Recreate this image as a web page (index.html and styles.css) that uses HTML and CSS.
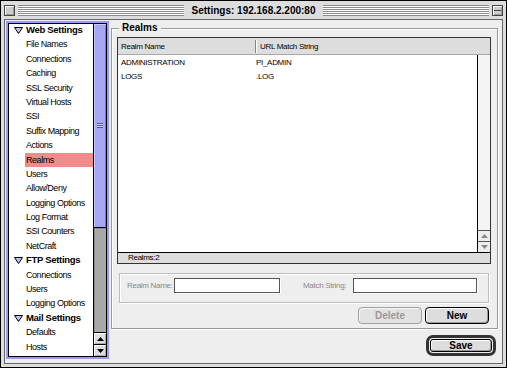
FILE: index.html
```html
<!DOCTYPE html>
<html lang="en">
<head>
    <meta charset="UTF-8">
    <meta name="viewport" content="width=device-width, initial-scale=1.0">
    <title>Settings: 192.168.2.200:80</title>
    <link rel="stylesheet" href="styles.css">
</head>
<body>
    <div class="window">
        <!-- Title bar -->
        <div class="titlebar">
            <span class="close-box"></span>
            <span class="stripes"></span>
            <span class="title">Settings: 192.168.2.200:80</span>
            <span class="stripes"></span>
            <span class="collapse-box"><span class="collapse-line"></span></span>
        </div>

        <div class="frame">
            <div class="content">
                <!-- Settings tree -->
                <div class="sidebar">
                    <div class="sidebar-inner">
                        <ul class="tree">
                            <li class="head"><svg class="disclosure" width="9" height="7" viewBox="0 0 9 7"><polygon points="0.5,0.5 8.5,0.5 4.5,6.5" fill="#c4c4f4" stroke="#000" stroke-width="1"/></svg>Web Settings</li>
                            <li>File Names</li>
                            <li>Connections</li>
                            <li>Caching</li>
                            <li>SSL Security</li>
                            <li>Virtual Hosts</li>
                            <li>SSI</li>
                            <li>Suffix Mapping</li>
                            <li>Actions</li>
                            <li class="selected">Realms</li>
                            <li>Users</li>
                            <li>Allow/Deny</li>
                            <li>Logging Options</li>
                            <li>Log Format</li>
                            <li>SSI Counters</li>
                            <li>NetCraft</li>
                            <li class="head"><svg class="disclosure" width="9" height="7" viewBox="0 0 9 7"><polygon points="0.5,0.5 8.5,0.5 4.5,6.5" fill="#c4c4f4" stroke="#000" stroke-width="1"/></svg>FTP Settings</li>
                            <li>Connections</li>
                            <li>Users</li>
                            <li>Logging Options</li>
                            <li class="head"><svg class="disclosure" width="9" height="7" viewBox="0 0 9 7"><polygon points="0.5,0.5 8.5,0.5 4.5,6.5" fill="#c4c4f4" stroke="#000" stroke-width="1"/></svg>Mail Settings</li>
                            <li>Defaults</li>
                            <li>Hosts</li>
                        </ul>
                        <div class="vscroll">
                            <div class="thumb"><span class="grip"></span></div>
                            <div class="track"></div>
                            <div class="arrow"><svg width="7" height="4" viewBox="0 0 7 4"><polygon points="3.5,0 7,4 0,4" fill="#000"/></svg></div>
                            <div class="arrow"><svg width="7" height="4" viewBox="0 0 7 4"><polygon points="0,0 7,0 3.5,4" fill="#000"/></svg></div>
                        </div>
                    </div>
                </div>

                <!-- Realms panel -->
                <div class="main">
                    <fieldset class="group">
                        <legend>Realms</legend>

                        <div class="table">
                            <div class="thead">
                                <div class="col1">Realm Name</div>
                                <div class="sep"></div>
                                <div class="col2">URL Match String</div>
                            </div>
                            <div class="tbody">
                                <div class="rows">
                                    <div class="row"><span class="cell1">ADMINISTRATION</span><span class="cell2">PI_ADMIN</span></div>
                                    <div class="row"><span class="cell1">LOGS</span><span class="cell2">.LOG</span></div>
                                </div>
                                <div class="tscroll">
                                    <div class="ttrack"></div>
                                    <div class="tarrow"><svg width="7" height="4" viewBox="0 0 7 4"><polygon points="3.5,0 7,4 0,4" fill="#888"/></svg></div>
                                    <div class="tarrow"><svg width="7" height="4" viewBox="0 0 7 4"><polygon points="0,0 7,0 3.5,4" fill="#888"/></svg></div>
                                </div>
                            </div>
                            <div class="tfoot">Realms:2</div>
                        </div>

                        <div class="edit-box">
                            <label class="lbl lbl-name">Realm Name:</label>
                            <input class="field field-name" type="text" disabled>
                            <label class="lbl lbl-match">Match String:</label>
                            <input class="field field-match" type="text" disabled>
                        </div>

                        <div class="actions">
                            <button class="btn" disabled>Delete</button>
                            <button class="btn">New</button>
                        </div>
                    </fieldset>

                    <div class="save-row">
                        <span class="default-ring"><button class="btn btn-save">Save</button></span>
                    </div>
                </div>
            </div>
        </div>
    </div>
</body>
</html>
```

FILE: styles.css
```css
* {
    margin: 0;
    padding: 0;
    box-sizing: border-box;
}

body {
    width: 507px;
    height: 368px;
    overflow: hidden;
    background: #dddddd;
    color: #000;
    font-family: "Liberation Sans", Arial, sans-serif;
}

/* Window chrome */
.window {
    width: 507px;
    height: 368px;
    border: 1px solid #000;
    background: #dddddd;
    display: flex;
    flex-direction: column;
}

.titlebar {
    height: 18px;
    display: flex;
    align-items: center;
    gap: 3px;
    padding: 0 3px;
}

.close-box,
.collapse-box {
    width: 11px;
    height: 11px;
    flex: none;
    border: 1px solid #444;
    background: #cccccc;
    box-shadow: inset 1px 1px 0 #fff, inset -1px -1px 0 #999;
}

.collapse-box {
    display: flex;
    align-items: center;
    padding: 0 1px;
}

.collapse-line {
    flex: 1;
    height: 1px;
    background: #444;
}

.stripes {
    flex: 1;
    height: 11px;
    background: repeating-linear-gradient(to bottom, #8a8a8a 0, #8a8a8a 1px, #fff 1px, #fff 2px);
}

.title {
    padding: 0 5px;
    font-size: 10px;
    font-weight: bold;
    white-space: nowrap;
}

.frame {
    flex: 1;
    padding: 0 3px 3px;
}

.content {
    height: 100%;
    border: 1px solid #666;
    background: #eeeeee;
    display: flex;
    padding: 1px 0 0 1px;
}

/* Sidebar tree */
.sidebar {
    width: 103px;
    height: 338px;
    flex: none;
    border: 2px solid #9a9af2;
}

.sidebar-inner {
    height: 100%;
    border: 1px solid #000;
    background: #fff;
    display: flex;
}

.tree {
    width: 84px;
    list-style: none;
    overflow: hidden;
    margin-top: -1px;
    font-size: 9px;
    letter-spacing: -0.45px;
}

.tree li {
    height: 14.4px;
    line-height: 14.4px;
    padding-left: 17px;
    white-space: nowrap;
}

.tree li.selected {
    margin-left: 16px;
    padding-left: 1px;
    background: #f28b8b;
}

.tree li.head {
    display: flex;
    align-items: center;
    gap: 3px;
    padding-left: 5px;
    font-size: 9.5px;
    font-weight: bold;
    letter-spacing: -0.3px;
}

.disclosure {
    flex: none;
}

.vscroll {
    width: 13px;
    flex: none;
    border-left: 1px solid #000;
    display: flex;
    flex-direction: column;
}

.thumb {
    height: 204px;
    flex: none;
    background: #a6a6f6;
    border-bottom: 1px solid #000;
    box-shadow: inset 1px 1px 0 #c8c8ff, inset -1px 0 0 #7a7ad0;
    display: flex;
    align-items: center;
    justify-content: center;
}

.grip {
    width: 6px;
    height: 5px;
    background: repeating-linear-gradient(to bottom, #5050b0 0, #5050b0 1px, #d4d4ff 1px, #d4d4ff 2px);
}

.track {
    flex: 1;
    background: #a8a8a8;
    box-shadow: inset 1px 1px 0 #8c8c8c;
}

.arrow {
    height: 12px;
    flex: none;
    border-top: 1px solid #000;
    background: #dddddd;
    box-shadow: inset 1px 1px 0 #fff, inset -1px -1px 0 #aaa;
    display: flex;
    align-items: center;
    justify-content: center;
}

/* Main panel */
.main {
    flex: 1;
    display: flex;
    flex-direction: column;
    padding: 0 4px 0 2px;
}

.group {
    margin-top: 1px;
    min-width: 0;
    border: 1px solid #9a9a9a;
    box-shadow: inset 1px 1px 0 #fff, 1px 1px 0 #fff;
    padding: 3px 6px 4px 5px;
}

.group legend {
    margin-left: 2px;
    padding: 0 3px;
    font-size: 10px;
    line-height: 12px;
    font-weight: bold;
}

.table {
    height: 227px;
    border: 1px solid #333;
    display: flex;
    flex-direction: column;
    font-size: 8px;
    letter-spacing: -0.3px;
}

.thead {
    height: 17px;
    flex: none;
    display: flex;
    align-items: center;
    background: #dddddd;
    border-bottom: 1px solid #aaa;
}

.thead .col1 {
    width: 137px;
    padding-left: 3px;
}

.thead .sep {
    width: 2px;
    height: 13px;
    border-left: 1px solid #888;
    border-right: 1px solid #fff;
}

.thead .col2 {
    padding-left: 3px;
}

.tbody {
    flex: 1;
    display: flex;
}

.rows {
    flex: 1;
    background: #fff;
}

.row {
    height: 14.5px;
    display: flex;
    align-items: center;
}

.cell1 {
    width: 138px;
    padding-left: 3px;
}

.tscroll {
    width: 13px;
    flex: none;
    border-left: 1px solid #000;
    display: flex;
    flex-direction: column;
    background: #f4f4f4;
}

.ttrack {
    flex: 1;
}

.tarrow {
    height: 11px;
    flex: none;
    border-top: 1px solid #555;
    background: #eeeeee;
    display: flex;
    align-items: center;
    justify-content: center;
}

.tfoot {
    height: 11px;
    flex: none;
    border-top: 1px solid #000;
    background: #dddddd;
    padding-left: 10px;
    line-height: 10px;
}

/* Edit fields */
.edit-box {
    height: 30px;
    margin: 9px 2px 0;
    border: 1px solid #bdbdbd;
    box-shadow: inset 1px 1px 0 #fff, 1px 1px 0 #fff;
    display: flex;
    align-items: flex-start;
    padding: 4px 0 0 7px;
    font-size: 8px;
    letter-spacing: -0.3px;
    color: #8a8a8a;
}

.lbl {
    line-height: 15px;
    white-space: nowrap;
}

.lbl-name {
    width: 47px;
}

.lbl-match {
    width: 50px;
    margin-left: 23px;
}

.field {
    height: 15px;
    border: 1px solid #555;
    background: #fff;
    box-shadow: 1px 1px 0 #fff;
    outline: none;
}

.field-name {
    width: 106px;
}

.field-match {
    width: 124px;
}

/* Buttons */
.actions {
    display: flex;
    justify-content: flex-end;
    gap: 3px;
    margin-top: 4px;
    padding-right: 2px;
}

.btn {
    width: 64px;
    height: 17px;
    border: 1px solid #000;
    border-radius: 4px;
    background: #dddddd;
    box-shadow: inset 1px 1px 0 #fff, inset -1px -1px 0 #999;
    font-family: "Liberation Sans", Arial, sans-serif;
    font-size: 10px;
    font-weight: bold;
    color: #000;
}

.btn:disabled {
    border-color: #a0a0a0;
    background: #e2e2e2;
    color: #9a9a9a;
    box-shadow: inset 1px 1px 0 #f6f6f6;
}

.save-row {
    display: flex;
    justify-content: flex-end;
    margin-top: 6px;
    padding-right: 2px;
}

.default-ring {
    display: flex;
    width: 70px;
    height: 21px;
    padding: 1px;
    border: 3px solid #333;
    border-radius: 7px;
    background: #eeeeee;
}

.btn-save {
    width: 100%;
    height: 100%;
    border-radius: 3px;
    line-height: 11px;
}
```
